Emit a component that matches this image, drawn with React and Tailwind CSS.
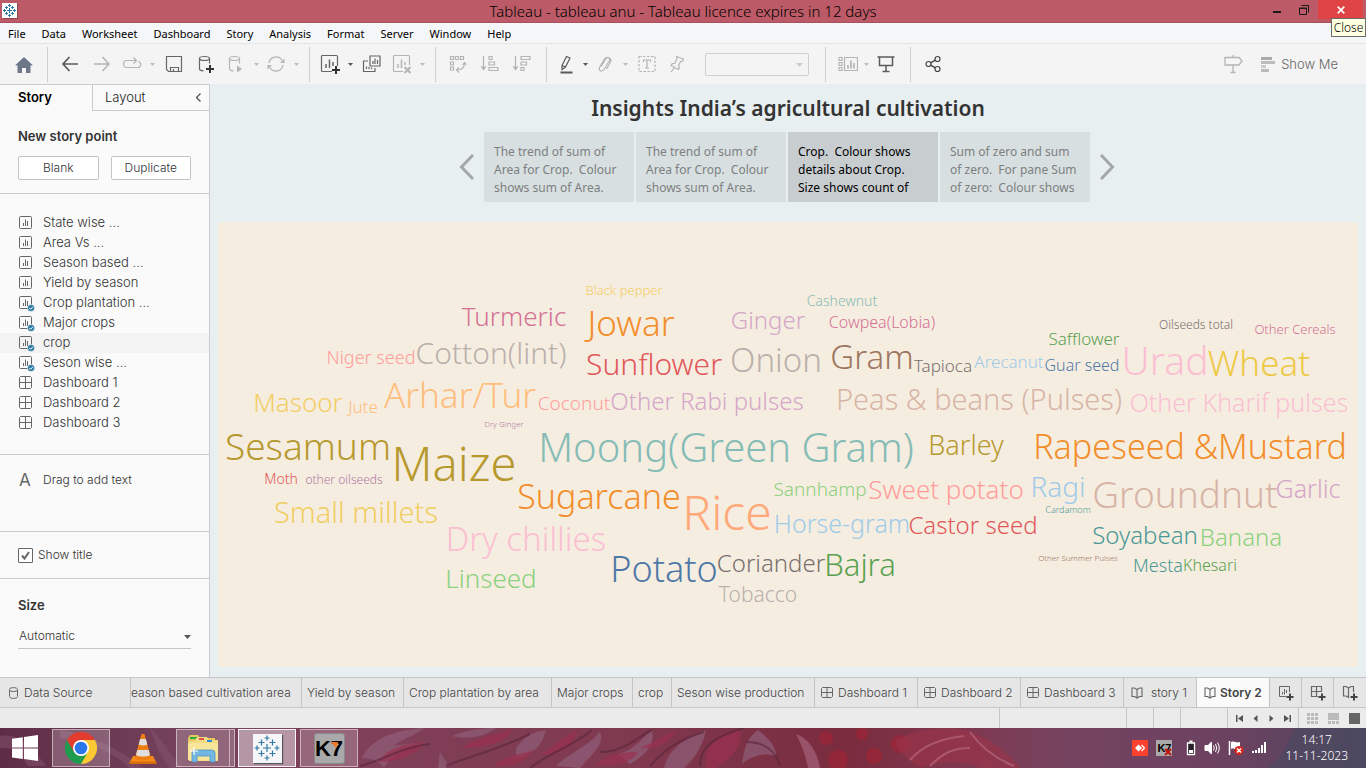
import React from 'react';

const UI = "font-['Inter','Liberation_Sans',sans-serif]";
const NOTO = "font-['Noto_Sans','Open_Sans',sans-serif]";

/* word, horizontal centre, baseline, size, colour */
const WORDS = [
  ['Black pepper', 624, 295, 13, '#f1ce63'],
  ['Turmeric', 514, 326, 26, '#d37295'],
  ['Jowar', 631, 336, 35, '#f28e2b'],
  ['Ginger', 768, 329, 24, '#d4a6c8'],
  ['Cashewnut', 842, 306, 14, '#86bcb6'],
  ['Cowpea(Lobia)', 882, 328, 16, '#d37295'],
  ['Niger seed', 371, 364, 18, '#ff9d9a'],
  ['Cotton(lint)', 491, 364, 30, '#bab0ac'],
  ['Sunflower', 654, 375, 30, '#e15759'],
  ['Onion', 776, 372, 33, '#bab0ac'],
  ['Gram', 872, 369, 33, '#9d7660'],
  ['Tapioca', 943, 372, 17, '#79706e'],
  ['Arecanut', 1009, 368, 17, '#a0cbe8'],
  ['Guar seed', 1082, 371, 16, '#4e79a7'],
  ['Safflower', 1084, 345, 17, '#59a14f'],
  ['Oilseeds total', 1196, 329, 12, '#79706e'],
  ['Other Cereals', 1295, 334, 13, '#d37295'],
  ['Urad', 1165, 375, 39, '#fabfd2'],
  ['Wheat', 1259, 376, 35, '#edc948'],
  ['Masoor', 298, 412, 26, '#f1ce63'],
  ['Jute', 363, 413, 17, '#ffbe7d'],
  ['Arhar/Tur', 460, 408, 35, '#ffbe7d'],
  ['Coconut', 574, 410, 19, '#ff9d9a'],
  ['Other Rabi pulses', 707, 410, 24, '#d4a6c8'],
  ['Peas & beans (Pulses)', 979, 410, 29, '#d7b5a6'],
  ['Other Kharif pulses', 1239, 412, 25, '#fabfd2'],
  ['Dry Ginger', 504, 427, 8, '#b07aa1'],
  ['Sesamum', 308, 460, 37, '#b6992d'],
  ['Maize', 454, 481, 47, '#b6992d'],
  ['Moong(Green Gram)', 726, 462, 40, '#86bcb6'],
  ['Barley', 966, 455, 27, '#b6992d'],
  ['Rapeseed &Mustard', 1190, 459, 34, '#f28e2b'],
  ['Moth', 281, 484, 14, '#e15759'],
  ['other oilseeds', 344, 484, 12, '#b07aa1'],
  ['Small millets', 356, 523, 29, '#f1ce63'],
  ['Sugarcane', 599, 509, 34, '#f28e2b'],
  ['Rice', 727, 530, 48, '#ffa97a'],
  ['Sannhamp', 820, 496, 19, '#8cd17d'],
  ['Sweet potato', 946, 499, 26, '#ff9d9a'],
  ['Ragi', 1058, 497, 28, '#a0cbe8'],
  ['Groundnut', 1185, 508, 37, '#d7b5a6'],
  ['Garlic', 1308, 498, 25, '#d4a6c8'],
  ['Cardamom', 1068, 513, 9, '#499894'],
  ['Horse-gram', 842, 533, 25, '#a0cbe8'],
  ['Castor seed', 973, 534, 24, '#e15759'],
  ['Soyabean', 1145, 544, 24, '#499894'],
  ['Banana', 1241, 546, 24, '#8cd17d'],
  ['Dry chillies', 526, 551, 33, '#fabfd2'],
  ['Linseed', 491, 588, 26, '#8cd17d'],
  ['Potato', 664, 582, 36, '#4e79a7'],
  ['Coriander', 771, 572, 24, '#79706e'],
  ['Bajra', 860, 576, 31, '#59a14f'],
  ['Tobacco', 758, 602, 21, '#bab0ac'],
  ['Other Summer Pulses', 1078, 561, 8, '#9d7660'],
  ['Mesta', 1158, 572, 18, '#499894'],
  ['Khesari', 1210, 571, 16, '#59a14f'],
];

function Icon({ w = 20, h = 20, className = 'text-[#666]', children }) {
  return (
    <svg width={w} height={h} viewBox={`0 0 ${w} ${h}`} fill="none" stroke="currentColor" strokeWidth="1.2" className={`shrink-0 ${className}`} aria-hidden="true">
      {children}
    </svg>
  );
}

const DIM = 'text-[#b4b4b4]';
const DARK = 'text-[#5b5b5b]';

function Tool({ label, width = 'w-7', children }) {
  return (
    <button type="button" aria-label={label} className={`flex h-8 shrink-0 items-center justify-center ${width}`}>
      {children}
    </button>
  );
}

function Caret({ dim, label }) {
  return (
    <Tool label={label} width="w-3">
      <svg width="5" height="3" viewBox="0 0 5 3" className={dim ? 'text-[#bdbdbd]' : 'text-[#555]'} aria-hidden="true">
        <path d="M0 0h5L2.500 3z" fill="currentColor" />
      </svg>
    </Tool>
  );
}

const Sep = ({ className = '' }) => <div className={`h-[35px] w-px shrink-0 bg-[#d0d0d0] ${className}`} />;

function Burst({ size }) {
  return (
    <svg width={size} height={size} viewBox="0 0 26 26" stroke="#2e79a5" strokeWidth="1.2" fill="none" className="shrink-0" aria-hidden="true">
      <path d="M13 9v8M9 13h8M13 .5v5M10.500 3h5M13 20.500v5M10.500 23h5M3 10.500v5M.5 13h5M23 10.500v5M20.500 13h5M7.500 4.500v6M4.500 7.500h6M18.500 4.500v6M15.500 7.500h6M7.500 15.500v6M4.500 18.500h6M18.500 15.500v6M15.500 18.500h6" />
    </svg>
  );
}

function SheetIcon({ used }) {
  return (
    <Icon w={17} h={17}>
      <path d="M1.500 2.500a1 1 0 0 1 1-1h10a1 1 0 0 1 1 1v10a1 1 0 0 1-1 1h-10a1 1 0 0 1-1-1zM5.500 11V8M7.500 11V4.500M9.500 11V6" strokeWidth="1" />
      {used && (
        <>
          <circle cx="13" cy="13" r="3.600" fill="#2f7ca3" stroke="#fafafa" strokeWidth=".6" />
          <path d="M11.300 13l1.300 1.300 2.200-2.400" stroke="#fff" strokeWidth="1" />
        </>
      )}
    </Icon>
  );
}

function GridIcon({ small }) {
  return small ? (
    <Icon w={13} h={12}><path d="M1.500 .5h9l1 1v8l-1 1h-9l-1-1v-8zM6 .5v10M.5 5.500h11" strokeWidth="1" /></Icon>
  ) : (
    <Icon w={17} h={17}><path d="M2.500 1.500h10l1 1v10l-1 1h-10l-1-1v-10zM7.500 1.500v12M1.500 7.500h12" strokeWidth="1" /></Icon>
  );
}

function BookIcon() {
  return (
    <Icon w={12} h={12}>
      <path d="M6 2.500v8.500M6 2.500L3.500 1H1v8.500h2.500L6 11l2.500-1.500H11V1H8.500z" strokeWidth="1.100" />
    </Icon>
  );
}

function WindowBar() {
  return (
    <header className="relative flex h-[23px] items-start border-b border-[#a8505c] bg-[#bc5b67]">
      <div className="ml-0.5 mt-[3px] flex size-[15px] items-center justify-center bg-white shadow-[1px_1px_0_#8d4650]">
        <svg width="13" height="13" stroke="#2e79a5" fill="none" aria-hidden="true"><path d="M6.500 4v5M4 6.500h5M6.500 0v3M5 1.500h3M6.500 10v3M5 11.500h3M1.500 5v3M0 6.500h3M11.500 5v3M10 6.500h3M3.500 2v3M2 3.500h3M9.500 2v3M8 3.500h3M3.500 8v3M2 9.500h3M9.500 8v3M8 9.500h3" /></svg>
      </div>
      <h1 className={`absolute inset-x-0 top-px text-center text-[15px] leading-5 font-light text-black ${NOTO}`}>Tableau - tableau anu - Tableau licence expires in 12 days</h1>
      <div className="relative ml-auto flex items-start pr-[3px]">
        <button type="button" aria-label="Minimise" className="flex h-[19px] w-[26px] items-center justify-center">
          <svg width="8" height="8" aria-hidden="true"><path d="M0 6h8" stroke="#1b1b1b" strokeWidth="2" /></svg>
        </button>
        <button type="button" aria-label="Restore" className="flex h-[19px] w-[28px] items-center justify-center">
          <svg width="10" height="10" fill="none" stroke="#1b1b1b" aria-hidden="true"><path d="M.5 3h7v6.500h-7zM0 3.500h8M2.500 .5h7v7" /></svg>
        </button>
        <button type="button" aria-label="Close" className="flex h-[19px] w-[45px] items-center justify-center bg-[#e04343]">
          <svg width="8" height="8" aria-hidden="true"><path d="M.7 .7l6.600 6.600M7.300 .7L.7 7.300" stroke="#fff" strokeWidth="1.700" /></svg>
        </button>
        <div role="tooltip" className={`absolute right-0 top-[18px] z-10 h-[19px] w-[35px] border border-[#6b6b6b] bg-[#ffffe1] text-center text-[12px] leading-[17px] font-light text-black ${NOTO}`}>Close</div>
      </div>
    </header>
  );
}

const MENUS = ['File', 'Data', 'Worksheet', 'Dashboard', 'Story', 'Analysis', 'Format', 'Server', 'Window', 'Help'];

function MenuBar() {
  return (
    <nav className={`flex h-[21px] items-center gap-4 border-b border-[#e4e6e8] bg-[#f5f6f8] pl-2 pt-0.5 text-[11px] text-black ${NOTO}`}>
      {MENUS.map((m) => <button key={m} type="button" className="leading-5">{m}</button>)}
    </nav>
  );
}

function Toolbar() {
  return (
    <div className="flex h-10 items-center bg-[#f4f4f4]" role="toolbar">
      <Tool label="Start page" width="w-[47px]">
        <svg width="18" height="16" viewBox="0 0 18 16" className="mt-0.5" aria-hidden="true"><path d="M9 0L0 8.500h2.500V16H7v-5h4v5h4.500V8.500H18z" fill="#6c7787" /></svg>
      </Tool>
      <Sep className="mr-1.5" />
      <Tool label="Undo" width="w-8"><Icon className={DARK}><path d="M18 10H3M9.500 3L3 10l6.500 7" strokeWidth="1.700" /></Icon></Tool>
      <Tool label="Redo" width="w-8"><Icon className={DIM}><path d="M2 10h15M10.500 3L17 10l-6.500 7" strokeWidth="1.500" /></Icon></Tool>
      <Tool label="Replay"><Icon className={DIM}><path d="M16.500 7.500c3 .5 3 6-1 6h-11c-4 0-4-7 0-7h10M11.500 3.500l3 3-3 3" /></Icon></Tool>
      <Caret dim label="Replay options" />
      <Tool label="Save" width="w-8"><Icon w={18} h={18}><path d="M1.500 1.500h15v15h-13l-2-2zM5.500 16.500v-4h8v4M8.500 16.500V14" /></Icon></Tool>
      <Tool label="New data source" width="w-8"><Icon><ellipse cx="8.500" cy="4.500" rx="5" ry="2" /><path d="M3.500 4.500V15c0 1 1.500 1.700 4 1.900M13.500 4.500v5" /><path d="M14 11v8M10 15h8" stroke="#333" strokeWidth="2" /></Icon></Tool>
      <Tool label="Pause auto updates"><Icon className={DIM}><ellipse cx="8.500" cy="4.500" rx="5" ry="2" /><path d="M3.500 4.500V15c0 1 1.500 1.700 4 1.900M13.500 4.500v5" /><path d="M11 11.500v7l5-3.500z" fill="currentColor" stroke="none" /></Icon></Tool>
      <Caret dim label="Update options" />
      <Tool label="Run update"><Icon className={DIM}><path d="M3 9a7 7 0 0 1 13-2.500M17 11a7 7 0 0 1-13 2.500" strokeWidth="1.300" /><path d="M18.500 4.500v4.500h-4.500zM1.500 15.500V11H6z" fill="currentColor" stroke="none" /></Icon></Tool>
      <Caret dim label="Refresh options" />
      <Sep className="ml-[7px] mr-1.5" />
      <Tool label="New worksheet"><Icon><path d="M12 17.500H2.500a1 1 0 0 1-1-1v-14a1 1 0 0 1 1-1h14a1 1 0 0 1 1 1V12" /><path d="M6 14v-4M9.500 14V5.500M13 12V8" strokeWidth="1.500" /><path d="M16 12v8M12 16h8" stroke="#333" strokeWidth="2" /></Icon></Tool>
      <Caret label="New sheet options" />
      <Tool label="Duplicate sheet" width="w-8"><Icon><path d="M8 2h10v10H8zM6 7H1.500v10.500H13V14M11 10V7M13 10V4.500M15.500 10V6M4.500 15v-2.500M7 15v-2M9.500 15v-1.500" /></Icon></Tool>
      <Tool label="Clear sheet"><Icon className={DIM}><path d="M11 17.500H2.500a1 1 0 0 1-1-1v-14a1 1 0 0 1 1-1h14a1 1 0 0 1 1 1V11" /><path d="M6 14v-4M9.500 14V5.500M13 11V8" strokeWidth="1.500" /><path d="M12.500 13l6 6M18.500 13l-6 6" strokeWidth="2" /></Icon></Tool>
      <Caret dim label="Clear options" />
      <Sep className="ml-[7px] mr-1.5" />
      <Tool label="Swap rows and columns" width="w-8"><Icon className={DIM}><path d="M2.500 2.500h3v3h-3zM7.500 2.500h3v3h-3zM12.500 2.500h3v3h-3zM2.500 8h3v3h-3zM2.500 13h3v3h-3zM9 16c5 0 7.500-2 7.500-7M14.500 11l2-2.500 2 2.500M11 13.500L8.500 16l2.500 2.500" /></Icon></Tool>
      <Tool label="Sort ascending" width="w-8"><Icon className={DIM}><path d="M3.500 2v14M9 2.500h3v3H9zM9 8h5.500v3H9zM9 13.500h9v3H9z" /><path d="M.5 12.500h6l-3 4z" fill="currentColor" stroke="none" /></Icon></Tool>
      <Tool label="Sort descending" width="w-8"><Icon className={DIM}><path d="M3.500 2v14M9 2.500h9v3H9zM9 8h5.500v3H9zM9 13.500h3v3H9z" /><path d="M.5 12.500h6l-3 4z" fill="currentColor" stroke="none" /></Icon></Tool>
      <Sep className="mx-2" />
      <Tool label="Highlight" width="w-6"><Icon className={DARK}><path d="M5 11.500L9.500 2.500l3.500 1.500-4.500 9L5 15.500zM5 11.500l3.500 1.500" /><path d="M3.500 18.500h12" strokeWidth="2" /></Icon></Tool>
      <Caret label="Highlight options" />
      <Tool label="Group members"><Icon className={DIM}><path d="M6 12.500l5-8c1.500-2 4.500-.5 3.500 2l-5.500 9c-2 3-6 1-4.500-2L9.500 5c2-3 8-1.500 6 3l-4 7" /></Icon></Tool>
      <Caret dim label="Group options" />
      <Tool label="Show mark labels" width="w-8"><Icon className={DIM}><path d="M2 2.500h16v15H2z" strokeDasharray="2.500 1.500" /><path d="M6.500 8V6h7v2M10 6v8M8 14h4" /></Icon></Tool>
      <Tool label="Fix axes"><Icon className={DIM}><path d="M9.500 2.500l7 2.500-.8 2-2 .3-2.200 4.200 1 2.700-1.200 1.300L4 11.500l1-1.700 2.700-.5L10 5zM7.500 13.500L4 18" /></Icon></Tool>
      <div className="relative mx-3.5 h-[23px] w-[104px] shrink-0">
        <select aria-label="Fit" disabled className="block size-full appearance-none rounded-[2px] border border-[#d0d0d0] bg-[#f4f4f4]">
          <option></option>
        </select>
        <svg width="7" height="4" className="pointer-events-none absolute right-1.5 top-[10px]" aria-hidden="true"><path d="M0 0h7L3.500 4z" fill="#ccc" /></svg>
      </div>
      <Sep className="mx-[10px] ml-0.5" />
      <Tool label="Show/hide cards" width="w-6"><Icon className={DIM}><path d="M1 3.500h3v3H1zM1 8.500h3v3H1zM1 13.500h3v3H1zM6.500 3.500h13v13h-13z" /><path d="M10 14.500V11M13 14.500V6.500M16 14.500V9" strokeWidth="1.700" /></Icon></Tool>
      <Caret dim label="Card options" />
      <Tool label="Presentation mode"><Icon className={DARK}><path d="M1.500 3h17M3.500 3v8.500h13V3M10 11.500V17M6.500 17.500h7" strokeWidth="1.500" /></Icon></Tool>
      <Sep className="ml-[10px] mr-2" />
      <Tool label="Share"><Icon className="text-[#444]"><circle cx="5.500" cy="10" r="2.500" /><circle cx="14.500" cy="5" r="2.500" /><circle cx="14.500" cy="15" r="2.500" /><path d="M7.700 8.800l4.600-2.600M7.700 11.200l4.600 2.600" strokeWidth="1.400" /></Icon></Tool>
      <div className="ml-auto flex items-center gap-3.5 pr-7">
        <Tool label="Guide"><Icon className={DIM}><path d="M2 3.500h14l3 3.500-3 4H2zM10 1v2.500M10 11v7.500M7.500 18.500h5" strokeWidth="1.300" /></Icon></Tool>
        <button type="button" className={`flex items-center gap-1.5 text-[13px] leading-5 font-light text-[#666] ${UI}`}>
          <svg width="14" height="15" aria-hidden="true"><path d="M0 0h11v3H0z" fill="#aaa" /><path d="M0 4h14v3H0zM0 12h8v3H0z" fill="#bcbcbc" /><path d="M0 8h5v3H0z" fill="#ccc" /></svg>
          Show Me
        </button>
      </div>
    </div>
  );
}

const SHEETS = [
  ['State wise ...', 'sheet'], ['Area Vs ...', 'sheet'], ['Season based ...', 'sheet'], ['Yield by season', 'sheet'],
  ['Crop plantation ...', 'used'], ['Major crops', 'used'], ['crop', 'used'], ['Seson wise ...', 'used'],
  ['Dashboard 1', 'board'], ['Dashboard 2', 'board'], ['Dashboard 3', 'board'],
];

function Sidebar() {
  return (
    <aside className={`flex w-[210px] shrink-0 flex-col border-r border-t border-[#ccc] bg-[#fafafa] text-[#333] ${UI}`}>
      <div className="flex h-[26px] text-[13px]">
        <button type="button" className="w-[92px] pl-[18px] text-left font-semibold text-black">Story</button>
        <div className="flex flex-1 items-center justify-between border-b border-l border-[#ccc] pl-3 pr-2">
          <button type="button" className="font-light text-[#222]">Layout</button>
          <button type="button" aria-label="Collapse pane"><svg width="5" height="9" fill="none" stroke="#555" strokeWidth="1.300" aria-hidden="true"><path d="M4.500 .5l-4 4 4 4" /></svg></button>
        </div>
      </div>
      <section className="h-[83px] border-b border-[#ccc] px-[18px] pt-[15px]">
        <h2 className="text-[13px] leading-5 font-semibold text-[#333]">New story point</h2>
        <div className="mt-[10px] flex gap-3 text-[12px] font-light">
          <button type="button" className="h-6 flex-1 rounded-[2px] border border-[#c4c4c4] bg-white">Blank</button>
          <button type="button" className="h-6 flex-1 rounded-[2px] border border-[#c4c4c4] bg-white">Duplicate</button>
        </div>
      </section>
      <ul className="border-b border-[#ccc] pb-[21px] pt-[19px] text-[13px] font-light">
        {SHEETS.map(([name, kind]) => (
          <li key={name} className={`flex h-5 items-center gap-2 pl-[18px] ${name === 'crop' ? 'bg-[#f3f3f3]' : ''}`}>
            {kind === 'board' ? <GridIcon /> : <SheetIcon used={kind === 'used'} />}
            {name}
          </li>
        ))}
      </ul>
      <div className="flex h-[77px] items-start border-b border-[#ccc] pl-[19px] pt-[15px]">
        <span className="w-6 text-[17px] leading-5 text-[#666]">A</span>
        <span className="text-[12px] leading-5 font-light">Drag to add text</span>
      </div>
      <label className="flex h-[47px] items-center gap-[5px] border-b border-[#ccc] pl-[18px] text-[12px] font-light">
        <span className="relative flex size-[15px]">
          <input type="checkbox" defaultChecked className="peer size-[15px] appearance-none rounded-[1px] border border-[#666] bg-white" />
          <svg width="15" height="15" fill="none" stroke="#666" strokeWidth="2" className="pointer-events-none absolute inset-0 hidden peer-checked:block" aria-hidden="true"><path d="M4 7.500L6.500 10.500 11 4" /></svg>
        </span>
        Show title
      </label>
      <section className="flex-1 px-[18px] pt-4">
        <h2 className="text-[13px] leading-5 font-semibold text-[#333]">Size</h2>
        <div className="relative mt-[9px] border-b border-[#c4c4c4]">
          <select aria-label="Size" className="block h-6 w-full appearance-none bg-transparent pl-px text-[12px] leading-5 font-light text-[#333]">
            <option>Automatic</option>
          </select>
          <svg width="7" height="4" className="pointer-events-none absolute right-0 top-[11px]" aria-hidden="true"><path d="M0 0h7L3.500 4z" fill="#555" /></svg>
        </div>
      </section>
    </aside>
  );
}

const CAPTIONS = [
  'The trend of sum of\nArea for Crop.  Colour\nshows sum of Area.',
  'The trend of sum of\nArea for Crop.  Colour\nshows sum of Area.',
  'Crop.  Colour shows\ndetails about Crop.\nSize shows count of',
  'Sum of zero and sum\nof zero.  For pane Sum\nof zero:  Colour shows',
];

function Story() {
  return (
    <main className={`flex min-w-0 flex-1 flex-col bg-[#e8eff1] ${NOTO}`}>
      <h2 className="pt-2 text-center text-[21px] leading-8 font-semibold text-[#333]">Insights India’s agricultural cultivation</h2>
      <div className="mr-0.5 mt-2 flex items-center justify-center gap-[10px]">
        <button type="button" aria-label="Previous story point"><svg width="15" height="26" fill="none" stroke="#a3a7a8" strokeWidth="3" aria-hidden="true"><path d="M14 1L2.500 13 14 25" /></svg></button>
        <div className="flex gap-0.5">
          {CAPTIONS.map((c, i) => (
            <button key={i} type="button" className={`h-[70px] w-[150px] pl-[10px] pt-[5px] text-left text-[12px] leading-[18px] whitespace-pre ${i === 2 ? 'bg-[#c8cdd0] text-black' : 'bg-[#d8dfe0] text-[#7c8080]'}`}>{c}</button>
          ))}
        </div>
        <button type="button" aria-label="Next story point"><svg width="15" height="26" fill="none" stroke="#a3a7a8" strokeWidth="3" aria-hidden="true"><path d="M1 1l11.500 12L1 25" /></svg></button>
      </div>
      <div className="mx-2 mb-[10px] mt-5 flex flex-1 items-center bg-[#f6ede1]">
        <svg viewBox="218 222 1140 445" className="w-full font-light" role="img" aria-label="Crop word cloud">
          {WORDS.map(([t, x, y, s, c]) => (
            <text key={t} x={x} y={y} fontSize={s} fill={c} textAnchor="middle">{t}</text>
          ))}
        </svg>
      </div>
    </main>
  );
}

const Plus = <path d="M12 8.500v7M8.500 12h7" stroke="#444" strokeWidth="2" />;

function SheetTabs() {
  const tab = 'flex shrink-0 items-center border-r border-[#c4c4c4] whitespace-nowrap';
  return (
    <nav className={`flex h-[31px] overflow-hidden border-y border-[#c6c6c6] bg-[#e6e6e6] text-[12px] font-light text-[#444] ${UI}`}>
      <button type="button" className={`${tab} w-[131px] gap-1.5 pl-[9px]`}>
        <svg width="9" height="12" fill="none" stroke="#666" aria-hidden="true"><path d="M.5 2.500c0-2.500 8-2.500 8 0v7c0 2.500-8 2.500-8 0zM.5 3c0 2 8 2 8 0" /></svg>
        Data Source
      </button>
      <button type="button" className={`${tab} w-[171px]`}>eason based cultivation area</button>
      <button type="button" className={`${tab} w-[102px] pl-[5px]`}>Yield by season</button>
      <button type="button" className={`${tab} w-[148px] pl-[5px]`}>Crop plantation by area</button>
      <button type="button" className={`${tab} w-[81px] pl-[5px]`}>Major crops</button>
      <button type="button" className={`${tab} w-[39px] pl-[5px]`}>crop</button>
      <button type="button" className={`${tab} w-[143px] pl-[5px]`}>Seson wise production</button>
      {['Dashboard 1', 'Dashboard 2', 'Dashboard 3'].map((d) => (
        <button key={d} type="button" className={`${tab} w-[103px] gap-1 pl-1.5`}><GridIcon small />{d}</button>
      ))}
      <button type="button" className={`${tab} w-[73px] gap-2 pl-[7px]`}><BookIcon />story 1</button>
      <button type="button" className={`${tab} w-[73px] gap-1 bg-[#fafafa] pl-[7px] font-semibold text-[#444]`}><BookIcon />Story 2</button>
      <button type="button" aria-label="New worksheet" className={`${tab} w-8 justify-center`}><Icon w={16} h={16}><path d="M8 11.500H1.500v-10h10V7M4.500 9.500V7M6.500 9.500V4M8.500 8V5" strokeWidth="1" />{Plus}</Icon></button>
      <button type="button" aria-label="New dashboard" className={`${tab} w-8 justify-center`}><Icon w={16} h={16}><path d="M8 11.500H1.500v-10h10V7M6.500 1.500v10M1.500 6.500h10" />{Plus}</Icon></button>
      <button type="button" aria-label="New story" className="flex flex-1 items-center justify-center"><Icon w={16} h={16}><path d="M6.500 3v9.500L4 11H1.500V1.500H4L6.500 3 9 1.500h2.500V7" />{Plus}</Icon></button>
    </nav>
  );
}

function StatusBar() {
  const nav = 'flex w-4 items-center justify-center';
  return (
    <footer className="flex h-5 items-stretch justify-end bg-[#ebebeb]">
      <div className="w-[128px] border-x border-[#c6c6c6]" />
      <div className="w-[27px] border-r border-[#c6c6c6]" />
      <div className="w-[27px] border-r border-[#c6c6c6]" />
      <div className="w-[47px] border-r border-[#c6c6c6]" />
      <div className="flex w-[71px] justify-center border-r border-[#c6c6c6]">
        <button type="button" aria-label="First sheet" className={nav}><svg width="7" height="7" fill="#555"><path d="M0 0h1.500v7H0zM7 0v7L2 3.500z" /></svg></button>
        <button type="button" aria-label="Previous sheet" className={nav}><svg width="7" height="7" fill="#555"><path d="M5.500 0v7l-4-3.500z" /></svg></button>
        <button type="button" aria-label="Next sheet" className={nav}><svg width="7" height="7" fill="#555"><path d="M1.500 0v7l4-3.500z" /></svg></button>
        <button type="button" aria-label="Last sheet" className={nav}><svg width="7" height="7" fill="#555"><path d="M5.500 0H7v7H5.500zM0 0v7l5-3.500z" /></svg></button>
      </div>
      <div className="flex w-[67px] items-center justify-end gap-[10px] pr-1.5">
        <button type="button" aria-label="Sheet sorter"><svg width="11" height="11" fill="#bbb" className="block"><path d="M0 0h3v3H0zM4 0h3v3H4zM8 0h3v3H8zM0 4h3v3H0zM4 4h3v3H4zM8 4h3v3H8zM0 8h3v3H0zM4 8h3v3H4zM8 8h3v3H8z" /></svg></button>
        <button type="button" aria-label="Filmstrip"><svg width="11" height="11" fill="#bbb" className="block"><path d="M0 0h11v7H0zM0 8h3v3H0zM4 8h3v3H4zM8 8h3v3H8z" /></svg></button>
        <button type="button" aria-label="Tabs"><svg width="11" height="11" fill="#666" className="block"><path d="M0 0h11v11H0z" /></svg></button>
      </div>
    </footer>
  );
}

function Fabric() {
  return (
    <svg viewBox="0 0 1366 40" preserveAspectRatio="none" className="absolute inset-0 size-full" aria-hidden="true">
      <defs>
        <linearGradient id="cloth">
          <stop offset="0" stopColor="#5f2c46" /><stop offset=".12" stopColor="#73405a" /><stop offset=".26" stopColor="#7f4058" />
          <stop offset=".45" stopColor="#803a50" /><stop offset=".62" stopColor="#7a2c3e" /><stop offset=".7" stopColor="#80374f" />
          <stop offset=".78" stopColor="#75435f" /><stop offset=".9" stopColor="#6b4260" /><stop offset="1" stopColor="#50485f" />
        </linearGradient>
      </defs>
      <rect width="1366" height="40" fill="url(#cloth)" />
      <path d="M0 8C16 4 32 18 46 38H28C20 24 10 18 0 20zM60 2c30 4 60 20 84 38h-14C110 22 84 12 60 10zM150 0c14 12 18 26 34 40h-14C160 28 154 14 150 0z" fill="#855370" opacity=".5" />
      <g fill="#8f5c77" opacity=".75">
        <path d="M362 30c8-18 30-28 62-30-8 8-22 10-30 18 10-2 22-4 30-2-20 4-34 12-40 24-4-6-12-10-22-10z" />
        <path d="M440 24c4 8 10 12 6 16h-8zM452 8c14-6 30-8 44-8-10 8-26 12-44 8zM516 20c8-10 14-16 30-18-4 14-10 24-30 28z" />
        <path d="M556 38c14-14 30-18 44-34 6 12-10 24-20 36zM618 26c16-4 22-14 34-24 4 16-8 26-22 34zM664 40c4-18 20-30 42-38-2 12-10 28-22 38z" />
        <path d="M742 36c2-14 4-26 16-34 10 8 18 16 18 26-12-4-24 0-34 8z" />
      </g>
      <g fill="#9a3150" opacity=".7">
        <path d="M378 34c10-14 26-18 46-20-6 12-24 20-46 20zM462 20c14-12 34-12 50-20-2 14-28 20-50 20zM494 38c12-12 22-10 40-16-6 10-20 18-40 16z" />
        <path d="M540 26c14-6 18-16 38-24-4 16-18 26-38 24zM596 36c10-10 28-12 42-12-8 12-26 16-42 12zM640 20c12-4 22-12 36-18-4 12-20 20-36 18z" />
        <path d="M706 40c-4-18 8-32 34-38 4 12-8 30-24 38z" />
      </g>
      <g fill="none" stroke="#56243a" strokeWidth="2" opacity=".6">
        <path d="M360 38c24-6 44-20 70-22M446 38c24-10 52-16 84-32M530 40c20-16 40-20 62-38M600 24c24 0 36-14 52-22M650 38c14-16 28-26 54-34M700 38c0-20 16-30 44-38M746 14c20 0 30 10 34 24" />
      </g>
      <path d="M796 6c16 6 22 22 24 34h-12c-2-12-6-22-12-34z" fill="#a5637a" opacity=".7" />
      <g fill="#a52335" opacity=".6"><circle cx="838" cy="32" r="10" /><circle cx="874" cy="28" r="8" /><circle cx="826" cy="10" r="7" /><circle cx="862" cy="6" r="6" /><circle cx="900" cy="16" r="9" /></g>
      <path d="M896 12c20-10 40-14 70-10 22 8 38 18 54 38h-40c-20-10-40-6-60 0-10-8-24-16-24-28z" fill="#9c3449" opacity=".6" />
      <path d="M910 32c14-16 34-22 54-24M930 38c14-14 24-18 40-18M970 4c10 14 24 26 44 34" fill="none" stroke="#cf8e9b" strokeWidth="2" opacity=".4" />
      <path d="M1266 40c20-10 22-30 30-40h70v40z" fill="#464a61" opacity=".5" />
    </svg>
  );
}

function K7({ small }) {
  return (
    <span className={`relative flex items-center justify-center overflow-hidden bg-[#a9a9a9] font-['Liberation_Sans',sans-serif] font-bold text-black ${small ? 'size-4 text-[11px]' : 'size-[31px] rounded-[3px] border border-[#8a8a8a] text-[22px]'}`}>
      K7
      {small
        ? <svg width="8" height="8" className="absolute bottom-0 right-0" aria-hidden="true"><path d="M1 1l6 6M7 1L1 7" stroke="#c4120c" strokeWidth="2" /></svg>
        : <svg width="8" height="8" className="absolute right-[5px] top-2" aria-hidden="true"><path d="M0 0h7L5 6z" fill="#f47721" /></svg>}
    </span>
  );
}

function Taskbar() {
  const open = 'border border-white/50 bg-white/20';
  const app = 'flex h-[38px] items-center justify-center';
  return (
    <div className="relative h-10 overflow-hidden">
      <Fabric />
      <div className="relative flex h-full items-center">
        <button type="button" aria-label="Start" className={`${app} w-[50px]`}>
          <svg width="26" height="26" viewBox="0 0 26 26" fill="#fff" aria-hidden="true"><path d="M0 3.700L10.800 2.200v10.300H0zM12 2L26 0v12.500H12zM0 13.600h10.800v10.300L0 22.400zM12 13.600h14V26l-14-2z" /></svg>
        </button>
        <button type="button" aria-label="Chrome" className={`${app} ${open} ml-0.5 w-[58px]`}>
          <svg width="32" height="32" viewBox="0 0 32 32" aria-hidden="true">
            <path d="M16 16V8h13.860A16 16 0 0 1 16 32z" fill="#fcc934" />
            <path d="M22.900 20L16 32A16 16 0 0 1 2.140 8L9.100 20q7 8 13.800 0z" fill="#1e9c4b" />
            <path d="M2.140 8A16 16 0 0 1 29.860 8H16l-7 12z" fill="#e33b2e" />
            <circle cx="16" cy="16" r="8" fill="#fff" /><circle cx="16" cy="16" r="6.300" fill="#2a75e8" />
          </svg>
        </button>
        <button type="button" aria-label="VLC" className={`${app} w-[66px]`}>
          <svg width="28" height="31" viewBox="0 0 28 31" aria-hidden="true">
            <path d="M4 23h20l3.500 7H.5z" fill="#f58a1b" /><path d="M.5 28.500h27V31H.5z" fill="#d96c0a" />
            <path d="M12.500 1h3L22 25c-3 3-13 3-16 0z" fill="#f07d12" />
            <path d="M11.200 6h5.600l1.500 5.500c-2 1.200-6.600 1.200-8.600 0zM8.300 17h11.400l1.300 5c-3 2-11 2-14 0z" fill="#dedede" />
          </svg>
        </button>
        <div className="flex">
          <button type="button" aria-label="File Explorer" className={`${app} ${open} w-[54px]`}>
            <svg width="32" height="30" viewBox="0 0 32 30" aria-hidden="true">
              <path d="M1 5l2-3h8l2 3h15v22H1z" fill="#e9c75f" /><path d="M3 4h8v2H3z" fill="#2aa84a" /><path d="M9 5l2-1h9l2 3h9v21H2V8h7z" fill="#f3dc83" />
              <path d="M12 5h5v2h-5z" fill="#e05243" /><path d="M20 7h5v2h-5z" fill="#2a8bd8" /><path d="M1 10h30v17H1z" fill="#f7e59a" />
              <path d="M5 29V20q0-3 3-3h17q3 0 3 3v9h-5v-6H10v6z" fill="#74b7e0" stroke="#4b92c4" strokeWidth=".8" />
              <path d="M7 14v8M3 18h8" stroke="#fff" strokeWidth="1.200" />
            </svg>
          </button>
          <div className="h-[38px] w-[5px] border border-l-0 border-white/50 bg-white/20" />
        </div>
        <button type="button" aria-label="Tableau" className="ml-[3px] flex h-[38px] w-[58px] items-center justify-center border border-white/90 bg-white/45">
          <span className="flex size-[29px] items-center justify-center bg-[#f6f6f8] shadow-[1px_1px_1px_#555]"><Burst size={26} /></span>
        </button>
        <button type="button" aria-label="K7 Security" className={`${app} ${open} ml-1 w-[58px]`}><K7 /></button>
        <div className="ml-auto flex items-center pr-[18px]">
          <svg width="16" height="16" className="mr-2" aria-hidden="true"><path d="M0 0h16v16H0z" fill="#f8422f" /><path d="M6.500 4.500L10 8l-3.500 3.500L3 8z" fill="#fff" /><path d="M9.500 5L12.500 8l-3 3" fill="none" stroke="#fff" strokeWidth="1.300" /></svg>
          <K7 small />
          <svg width="10" height="16" className="ml-3.5 mr-2" aria-hidden="true"><path d="M1.500 3h7v11.500h-7z" fill="#2b2029" stroke="#fff" strokeWidth="1.300" /><path d="M3.500 .5h3v2h-3zM3 10h4v3H3z" fill="#fff" /></svg>
          <svg width="16" height="16" className="mr-2" fill="none" stroke="#fff" aria-hidden="true"><path d="M1 5.500h3L7.500 2v12L4 10.500H1z" fill="#fff" /><path d="M9.500 5.500q1.500 2.500 0 5M11.500 4q2.500 4 0 8M13.500 2.500q3.500 5.500 0 11" /></svg>
          <svg width="16" height="16" className="mr-2" aria-hidden="true"><path d="M1.500 1v14" stroke="#fff" strokeWidth="1.500" /><path d="M3 2c4-1.500 5 1.500 9 0v7c-4 1.500-5-1.500-9 0z" fill="#fff" /><circle cx="11" cy="10.500" r="4.500" fill="#d9261c" /><path d="M9 8.500l4 4M13 8.500l-4 4" stroke="#fff" strokeWidth="1.500" /></svg>
          <svg width="16" height="12" fill="#fff" aria-hidden="true"><path d="M0 9h2v2H0zM3 8h2v3H3zM6 6h2v5H6zM9 3h2v8H9zM12 0h2v11h-2z" /></svg>
          <div className={`ml-[17px] text-center text-[12px] leading-4 font-light text-white ${NOTO}`}>
            <div>14:17</div>
            <div>11-11-2023</div>
          </div>
        </div>
      </div>
    </div>
  );
}

export default function App() {
  return (
    <div className="flex min-h-screen flex-col bg-[#ebebeb]">
      <WindowBar />
      <MenuBar />
      <Toolbar />
      <div className="flex flex-1">
        <Sidebar />
        <Story />
      </div>
      <SheetTabs />
      <StatusBar />
      <Taskbar />
    </div>
  );
}
